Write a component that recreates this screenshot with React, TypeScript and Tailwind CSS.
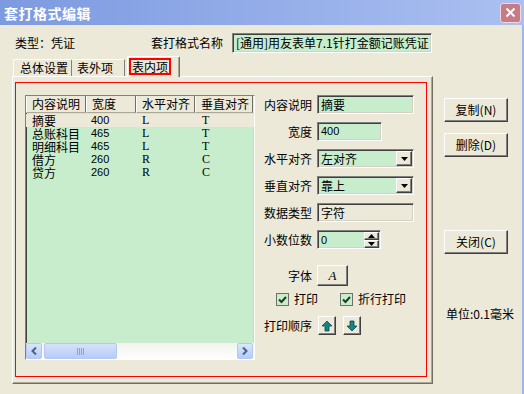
import React from 'react'

// classic 3D borders
const sunken =
    'border border-t-[#808080] border-l-[#808080] border-b-white border-r-white shadow-[inset_1px_1px_0_#404040,inset_-1px_-1px_0_#d4d0c8]'
const raised =
    'border border-t-white border-l-white border-b-[#404040] border-r-[#404040] shadow-[inset_-1px_-1px_0_#808080]'

interface Row {
    name: string
    width: string
    h: string
    v: string
}

const rows: Row[] = [
    { name: '摘要', width: '400', h: 'L', v: 'T' },
    { name: '总账科目', width: '465', h: 'L', v: 'T' },
    { name: '明细科目', width: '465', h: 'L', v: 'T' },
    { name: '借方', width: '260', h: 'R', v: 'C' },
    { name: '贷方', width: '260', h: 'R', v: 'C' },
]

const DownTri = () => (
    <svg width="7" height="4" viewBox="0 0 7 4">
        <polygon points="0,0 7,0 3.5,4" fill="#000" />
    </svg>
)

const UpTri = () => (
    <svg width="7" height="4" viewBox="0 0 7 4">
        <polygon points="0,4 7,4 3.5,0" fill="#000" />
    </svg>
)

const Check = () => (
    <div className="w-[13px] h-[13px] border border-[#6f6f6f] bg-[#c7edcc] flex items-center justify-center">
        <svg width="9" height="9" viewBox="0 0 9 9">
            <path d="M1 4.5 L3.5 7 L8 2" stroke="#1e3b1e" strokeWidth="2" fill="none" />
        </svg>
    </div>
)

const ScrollBtn = ({ dir }: { dir: 'l' | 'r' }) => (
    <div className="w-[16px] h-[16px] rounded-[2px] border border-[#b4c8f4] bg-linear-to-b from-[#dbe6fd] to-[#b6cbf8] flex items-center justify-center">
        <svg width="6" height="8" viewBox="0 0 6 8">
            <path
                d={dir === 'l' ? 'M5 0.5 L1.5 4 L5 7.5' : 'M1 0.5 L4.5 4 L1 7.5'}
                stroke="#4d6185"
                strokeWidth="2"
                fill="none"
            />
        </svg>
    </div>
)

const ArrowBtn = ({ up }: { up: boolean }) => (
    <div className={`w-[18px] h-[19px] bg-[#ece9d8] flex items-center justify-center ${raised}`}>
        <svg width="12" height="12" viewBox="0 0 12 12">
            <polygon
                points={up ? '6,1 11,6 8,6 8,11 4,11 4,6 1,6' : '6,11 11,6 8,6 8,1 4,1 4,6 1,6'}
                fill="#148484"
                stroke="#0a4a4a"
                strokeWidth="0.8"
            />
        </svg>
    </div>
)

const Label = ({ children }: { children: React.ReactNode }) => (
    <span className="w-[51px] text-right leading-[19px]">{children}</span>
)

export default function App() {
    return (
        <div className="w-[524px] h-[394px] bg-[#ece9d8] flex flex-col overflow-hidden text-[12px] leading-[14px] text-black font-['Noto_Sans_CJK_SC',sans-serif]">
            {/* title bar */}
            <div className="h-[25px] flex items-center justify-between pl-[4px] pr-[3px] bg-linear-to-r from-[#7d9ae0] to-[#abc0f1]">
                <span className="text-[14px] font-bold text-white tracking-[0.5px]">套打格式编辑</span>
                <div className="w-[21px] h-[20px] rounded-[3px] border border-[#ecd9dc] bg-[#c47d87] flex items-center justify-center">
                    <svg width="11" height="11" viewBox="0 0 11 11">
                        <path d="M1.5 1.5 L9.5 9.5 M9.5 1.5 L1.5 9.5" stroke="#fff" strokeWidth="2" />
                    </svg>
                </div>
            </div>

            <div className="flex-1 flex flex-col border-r-[2px] border-[#9fb6ec]">
                {/* top row */}
                <div className="mt-[8px] h-[20px] flex items-center">
                    <span className="ml-[15px] w-[136px]">类型：凭证</span>
                    <span className="w-[81px]">套打格式名称</span>
                    <div className={`w-[200px] h-[20px] bg-[#c7edcc] flex items-center pl-[3px] overflow-hidden whitespace-nowrap ${sunken}`}>
                        [通用]用友表单7.1针打金额记账凭证
                    </div>
                </div>

                <div className="flex mt-[3px]">
                    {/* tabs + panel */}
                    <div className="ml-[12px] flex flex-col">
                        <div className="h-[20px] flex items-end">
                            <div className="ml-[1px] w-[59px] h-[17px] border-t border-l border-white border-r border-r-[#808080] rounded-t-[2px] flex items-center pl-[6px]">
                                总体设置
                            </div>
                            <div className="w-[53px] h-[17px] border-t border-white border-r border-r-[#808080] flex items-center pl-[5px]">
                                表外项
                            </div>
                            <div className="relative z-10 ml-[2px] -mb-[1px] w-[53px] h-[21px] bg-[#ece9d8] border-t border-l border-white border-r border-r-[#716f64] shadow-[inset_-1px_0_0_#aca899] rounded-t-[2px] flex items-start pt-[1px]">
                                <span className="ml-[1px] border-2 border-[#ff0000] px-[1px] leading-[13px]">表内项</span>
                            </div>
                        </div>
                        <div className="w-[421px] h-[308px] border-t border-l border-white border-r border-b border-r-[#716f64] border-b-[#716f64] shadow-[inset_-1px_-1px_0_#aca899] pl-[2px] pt-[5px]">
                            <div className="w-[412px] h-[295px] border border-[#ff0000] flex pl-[9px] pt-[12px]">
                                {/* list */}
                                <div className={`w-[230px] h-[265px] bg-[#c7edcc] flex flex-col overflow-hidden ${sunken}`}>
                                    <div className="h-[17px] flex bg-[#ece9d8] shrink-0">
                                        {['内容说明', '宽度', '水平对齐', '垂直对齐'].map((t, i) => (
                                            <div
                                                key={t}
                                                className={`h-[17px] shrink-0 border-l border-white border-r border-r-[#716f64] border-b border-b-[#aca899] pl-[5px] leading-[16px] whitespace-nowrap ${
                                                    i === 0 ? 'w-[60px]' : i === 1 ? 'w-[50px]' : i === 2 ? 'w-[59px]' : 'w-[58px]'
                                                }`}
                                            >
                                                {t}
                                            </div>
                                        ))}
                                    </div>
                                    <div className="flex-1 flex flex-col pt-[1px]">
                                        {rows.map((r, i) => (
                                            <div
                                                key={r.name}
                                                className={`h-[13px] flex leading-[13px] ${i === 0 ? 'bg-[#ece9d8]' : ''}`}
                                            >
                                                <span className="w-[60px] pl-[6px]">{r.name}</span>
                                                <span className="w-[50px] pl-[5px] font-['Liberation_Sans',sans-serif] text-[11px]">{r.width}</span>
                                                <span className="w-[59px] pl-[6px] font-['Liberation_Serif',serif]">{r.h}</span>
                                                <span className="w-[58px] pl-[7px] font-['Liberation_Serif',serif]">{r.v}</span>
                                            </div>
                                        ))}
                                    </div>
                                    <div className="h-[16px] flex bg-linear-to-b from-[#f3f3ee] to-[#fefefe] shrink-0">
                                        <ScrollBtn dir="l" />
                                        <div className="ml-[2px] w-[73px] h-[16px] rounded-[2px] border border-[#b4c8f4] bg-linear-to-b from-[#d6e2fd] to-[#b7cbf8] flex items-center justify-center gap-[1px]">
                                            {[0, 1, 2, 3].map((k) => (
                                                <div key={k} className="w-[1px] h-[7px] bg-[#8ba3dc]" />
                                            ))}
                                        </div>
                                        <div className="flex-1" />
                                        <div className="mr-[1px]">
                                            <ScrollBtn dir="r" />
                                        </div>
                                    </div>
                                </div>

                                {/* form */}
                                <div className="ml-[6px] flex flex-col">
                                    <div className="flex gap-[5px]">
                                        <Label>内容说明</Label>
                                        <div className={`w-[97px] h-[19px] bg-[#c7edcc] pl-[3px] leading-[17px] ${sunken}`}>摘要</div>
                                    </div>
                                    <div className="flex gap-[5px] mt-[8px]">
                                        <Label>宽度</Label>
                                        <div className={`w-[65px] h-[19px] bg-[#c7edcc] pl-[3px] leading-[17px] font-['Liberation_Sans',sans-serif] text-[11px] ${sunken}`}>400</div>
                                    </div>
                                    {[
                                        ['水平对齐', '左对齐'],
                                        ['垂直对齐', '靠上'],
                                    ].map(([l, v]) => (
                                        <div key={l} className="flex gap-[5px] mt-[8px]">
                                            <Label>{l}</Label>
                                            <div className={`w-[97px] h-[19px] bg-[#c7edcc] flex items-center ${sunken}`}>
                                                <span className="flex-1 pl-[3px]">{v}</span>
                                                <div className={`w-[16px] h-[15px] mr-[1px] bg-[#ece9d8] flex items-center justify-center ${raised}`}>
                                                    <DownTri />
                                                </div>
                                            </div>
                                        </div>
                                    ))}
                                    <div className="flex gap-[5px] mt-[8px]">
                                        <Label>数据类型</Label>
                                        <div className={`w-[97px] h-[19px] bg-[#ece9d8] pl-[3px] leading-[17px] ${sunken}`}>字符</div>
                                    </div>
                                    <div className="flex gap-[5px] mt-[8px]">
                                        <Label>小数位数</Label>
                                        <div className={`w-[64px] h-[19px] bg-[#c7edcc] flex items-center ${sunken}`}>
                                            <span className="flex-1 pl-[3px] font-['Liberation_Sans',sans-serif] text-[11px]">0</span>
                                            <div className="mr-[1px] flex flex-col">
                                                <div className={`w-[15px] h-[8px] bg-[#ece9d8] flex items-center justify-center ${raised}`}>
                                                    <UpTri />
                                                </div>
                                                <div className={`w-[15px] h-[8px] bg-[#ece9d8] flex items-center justify-center ${raised}`}>
                                                    <DownTri />
                                                </div>
                                            </div>
                                        </div>
                                    </div>
                                    <div className="flex gap-[5px] mt-[16px] items-center">
                                        <Label>字体</Label>
                                        <div className={`w-[31px] h-[21px] bg-[#ece9d8] flex items-center justify-center italic font-['Liberation_Serif',serif] text-[13px] ${raised}`}>
                                            A
                                        </div>
                                    </div>
                                    <div className="flex items-center mt-[6px] h-[14px]">
                                        <div className="ml-[15px]">
                                            <Check />
                                        </div>
                                        <span className="ml-[5px]">打印</span>
                                        <div className="ml-[22px]">
                                            <Check />
                                        </div>
                                        <span className="ml-[5px]">折行打印</span>
                                    </div>
                                    <div className="flex items-center mt-[10px]">
                                        <Label>打印顺序</Label>
                                        <div className="ml-[6px]">
                                            <ArrowBtn up />
                                        </div>
                                        <div className="ml-[7px]">
                                            <ArrowBtn up={false} />
                                        </div>
                                    </div>
                                </div>
                            </div>
                        </div>
                    </div>

                    {/* right buttons */}
                    <div className="ml-[11px] mt-[42px] flex flex-col">
                        <div className={`w-[64px] h-[24px] bg-[#ece9d8] flex items-center justify-center ${raised}`}>复制(N)</div>
                        <div className={`mt-[11px] w-[64px] h-[24px] bg-[#ece9d8] flex items-center justify-center ${raised}`}>删除(D)</div>
                        <div className={`mt-[73px] w-[64px] h-[24px] bg-[#ece9d8] flex items-center justify-center ${raised}`}>关闭(C)</div>
                        <span className="mt-[53px] ml-[2px] whitespace-nowrap">单位:0.1毫米</span>
                    </div>
                </div>
            </div>
        </div>
    )
}
